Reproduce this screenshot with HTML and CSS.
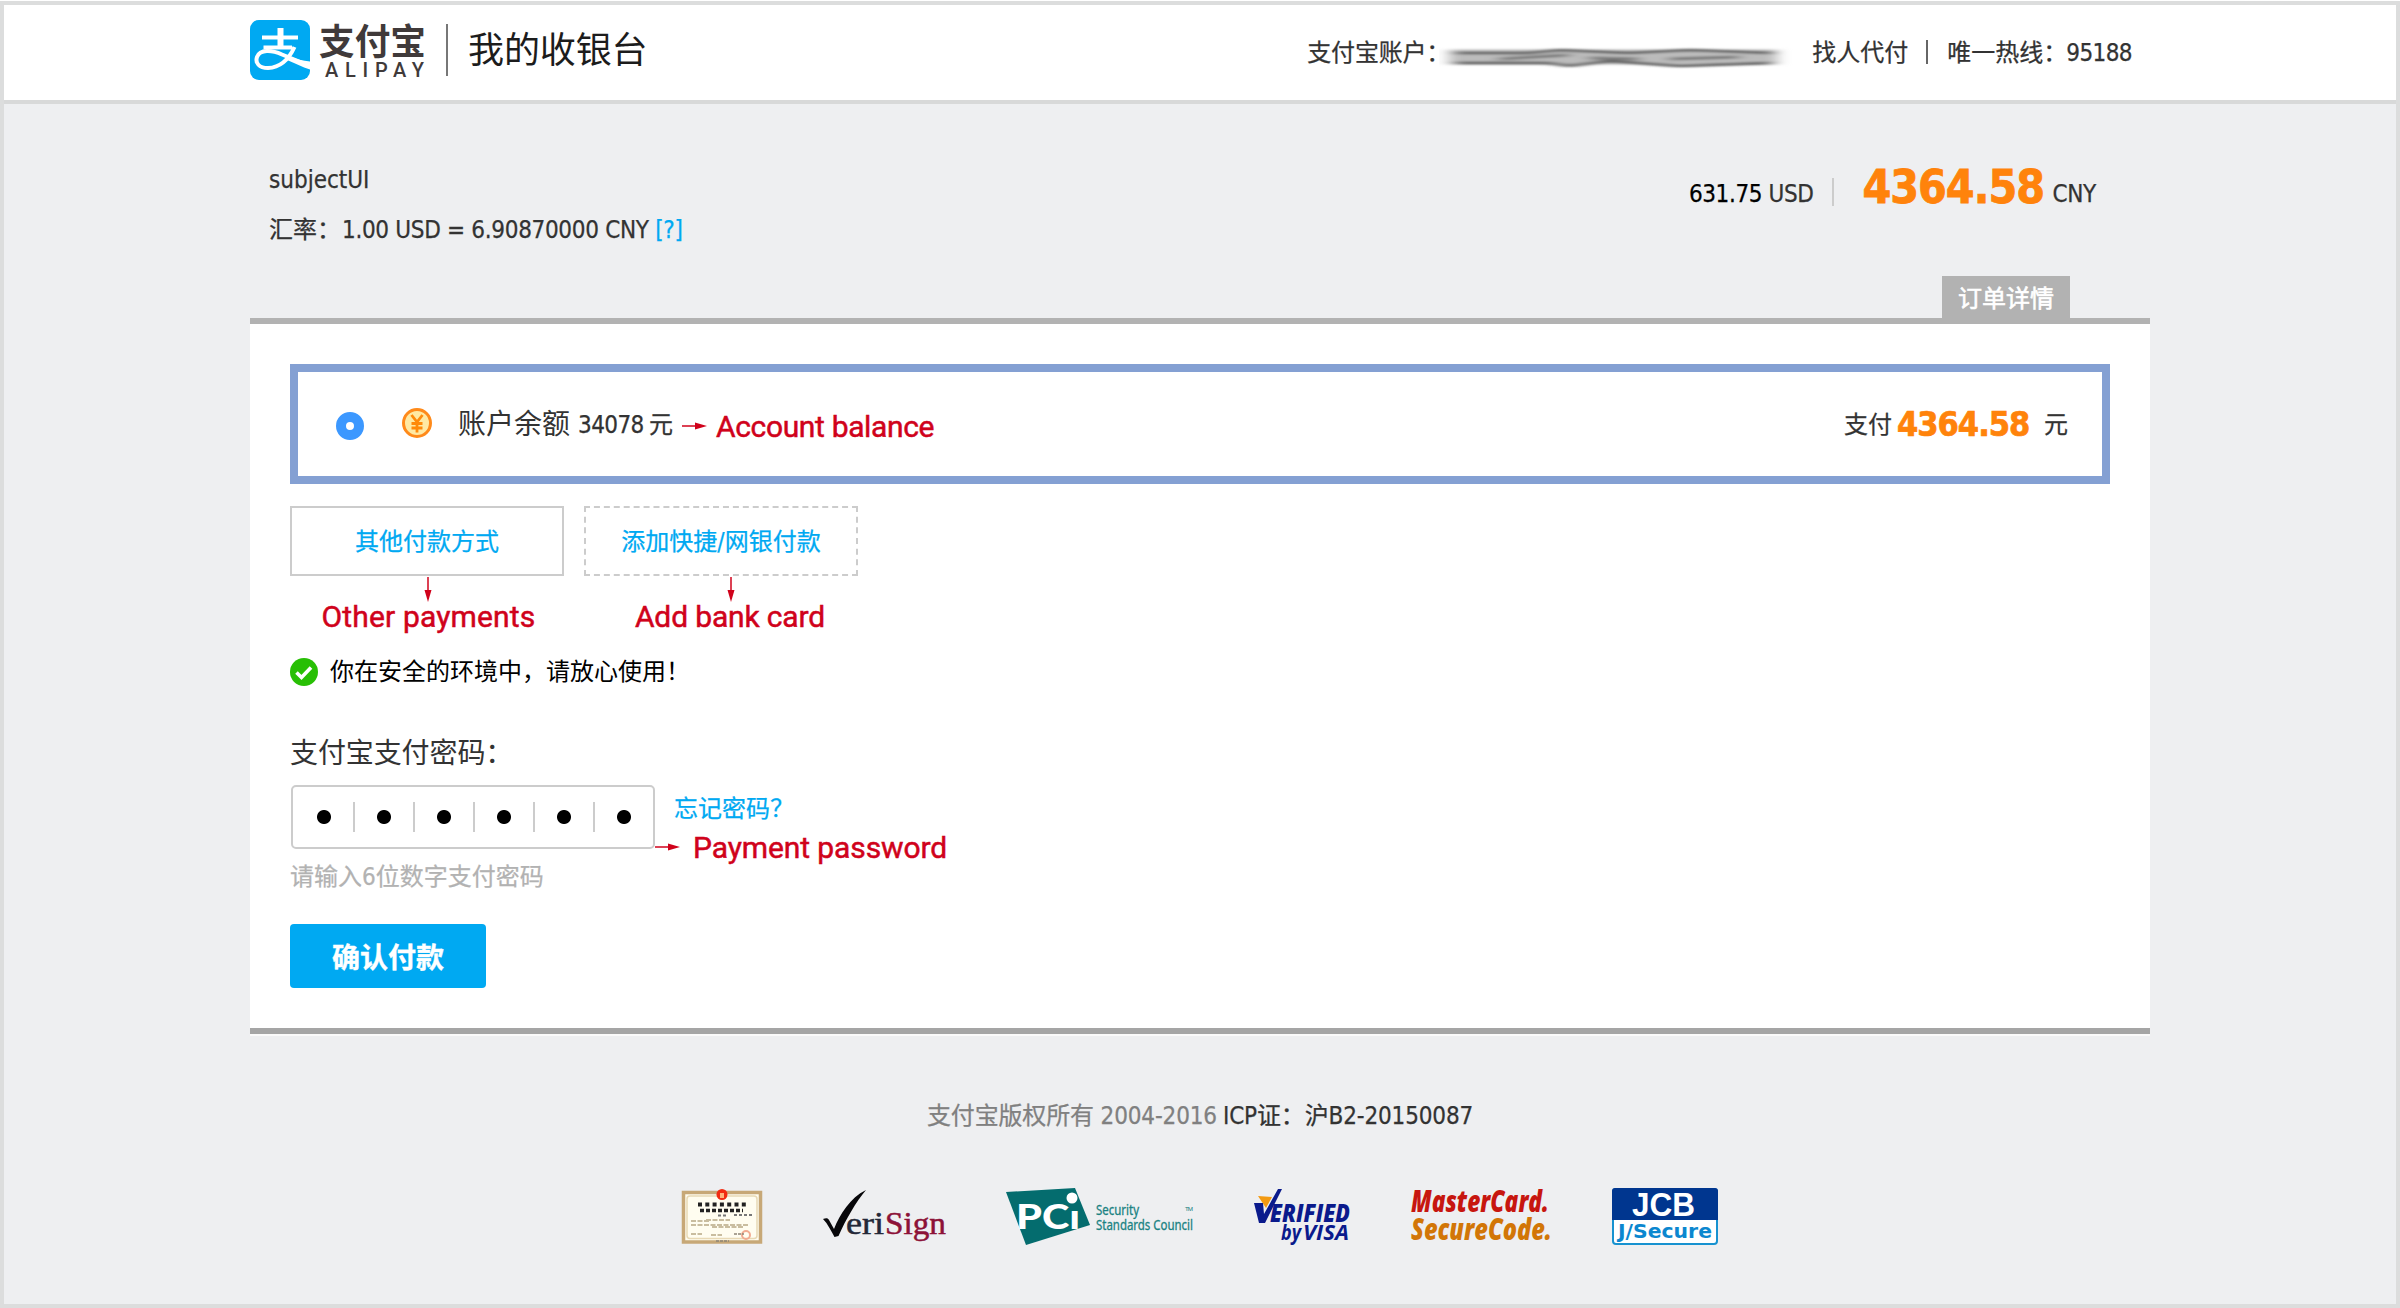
FILE: index.html
```html
<!DOCTYPE html>
<html lang="zh-CN">
<head>
<meta charset="utf-8">
<title>我的收银台</title>
<link rel="stylesheet" href="styles.css">
</head>
<body>
<div class="page">
  <header class="header">
    <div class="header-inner">
      <svg class="brand" width="198" height="60" viewBox="0 0 198 60">
        <rect width="60" height="60" rx="9" fill="#00a9f2"/>
        <g fill="none" stroke="#fff" stroke-width="4">
          <path d="M12 17.5H48M13.500 27.500H42" />
          <path d="M30.500 8V27" stroke-width="6"/>
          <path d="M44.500 27C39 39 31 47.500 18 48C9 48 5 43 7 37C10 29 22 30 32 34.500L60 46" stroke-width="4"/>
        </g>
        <path d="M38 36C46 39 53 41 60 41.500V49.500C52 47 45 43 37 40Z" fill="#fff"/>
        <text class="wordmark" x="69" y="35" textLength="107" lengthAdjust="spacingAndGlyphs">支付宝</text>
        <text class="latinmark" x="75" y="57" textLength="99">ALIPAY</text>
        <rect x="196" y="4" width="2" height="52" fill="#777"/>
      </svg>
      <h1 class="title">我的收银台</h1>
      <div class="account">
        <span class="account-label">支付宝账户：</span>
        <svg class="smudge" width="360" height="40" viewBox="0 0 360 40">
          <defs><filter id="soft" x="-5%" y="-50%" width="110%" height="200%"><feGaussianBlur stdDeviation="7 1.2"/></filter></defs>
          <g filter="url(#soft)" fill="none">
            <path d="M10 22H338" stroke="#bcbcbc" stroke-width="15"/>
            <path d="M16 18H90L120 15L190 18L250 15L334 18" stroke="#555" stroke-width="2.500"/>
            <path d="M16 28H110L130 31L170 26L240 31L332 28" stroke="#505050" stroke-width="2.500"/>
            <path d="M60 24L130 20M150 23L200 24M230 24L300 22" stroke="#777" stroke-width="3"/>
          </g>
        </svg>
        <span class="agent">找人代付</span>
        <span class="account-line"></span>
        <span class="hotline">唯一热线：</span><span class="hotline-number">95188</span>
      </div>
    </div>
  </header>

  <main class="main">
    <section class="order">
      <div class="order-info">
        <p class="subject">subjectUI</p>
        <p class="rate"><span class="rate-label">汇率：</span><span>1.00 USD = 6.90870000 CNY</span> <a class="help">[?]</a></p>
      </div>
      <div class="order-price">
        <span class="usd"><b>631.75</b> USD</span>
        <span class="price-line"></span>
        <span class="cny">4364.58</span>
        <span class="cny-unit">CNY</span>
      </div>
    </section>
    <div class="tab-row"><span class="tab">订单详情</span></div>

    <section class="panel">
      <div class="method">
        <span class="radio"></span>
        <svg class="coin" width="30" height="30" viewBox="0 0 30 30">
          <circle cx="15" cy="15" r="13.500" fill="#ffe9a3" stroke="#ff8a1a" stroke-width="3"/>
          <path d="M9.500 7L15 14L20.500 7M15 14V24.500M9.500 15.500H20.500M9.500 20H20.500" fill="none" stroke="#ff8a0a" stroke-width="2.800"/>
        </svg>
        <span class="method-name">账户余额</span>
        <span class="method-balance">34078</span>
        <span class="yuan">元</span>
        <svg class="arrow-balance" width="25" height="8" viewBox="0 0 25 8"><path d="M0 4H15" stroke="#d0021b" stroke-width="1.500"/><path d="M13 .5L25 4L13 7.500Z" fill="#d0021b"/></svg>
        <span class="note note-balance">Account balance</span>
        <span class="pay">支付</span>
        <span class="pay-amount">4364.58</span>
        <span class="yuan">元</span>
      </div>

      <div class="choices">
        <div class="choice">
          <a class="choice-box">其他付款方式</a>
          <svg class="arrow-down" width="8" height="25" viewBox="0 0 8 25"><path d="M4 0V15" stroke="#d0021b" stroke-width="1.500"/><path d="M.5 13L4 25L7.500 13Z" fill="#d0021b"/></svg>
          <span class="note note-other">Other payments</span>
        </div>
        <div class="choice">
          <a class="choice-box choice-add">添加快捷/网银付款</a>
          <svg class="arrow-down arrow-add" width="8" height="25" viewBox="0 0 8 25"><path d="M4 0V15" stroke="#d0021b" stroke-width="1.500"/><path d="M.5 13L4 25L7.500 13Z" fill="#d0021b"/></svg>
          <span class="note note-card">Add bank card</span>
        </div>
      </div>

      <p class="safe">
        <svg width="28" height="28" viewBox="0 0 28 28"><circle cx="14" cy="14" r="14" fill="#28bf05"/><path d="M6.500 14.500L11.500 19.500L21 9.500" fill="none" stroke="#fff" stroke-width="3.600"/></svg>
        <span>你在安全的环境中，请放心使用！</span>
      </p>

      <p class="password-label">支付宝支付密码：</p>
      <div class="password-row">
        <div class="password"><i></i><i></i><i></i><i></i><i></i><i></i></div>
        <div class="password-side">
          <a class="forgot">忘记密码？</a>
          <div class="note-row">
            <svg width="25" height="8" viewBox="0 0 25 8"><path d="M0 4H15" stroke="#d0021b" stroke-width="1.500"/><path d="M13 .5L25 4L13 7.500Z" fill="#d0021b"/></svg>
            <span class="note note-password">Payment password</span>
          </div>
        </div>
      </div>
      <p class="hint">请输入6位数字支付密码</p>
      <button class="confirm">确认付款</button>
    </section>
  </main>

  <footer class="footer">
    <p class="copyright"><span class="owner">支付宝版权所有 2004-2016</span><span class="icp">ICP证：沪B2-20150087</span></p>
    <div class="seals">
      <svg class="seal-cert" width="80" height="56" viewBox="0 0 80 56">
        <rect x="1.500" y="4.500" width="77" height="49.500" fill="#fffdf0" stroke="#c7a877" stroke-width="3.500"/>
        <rect x="5" y="8" width="70" height="42.500" rx="3" fill="none" stroke="#e8d9b5" stroke-width="1.500"/>
        <circle cx="40" cy="6.500" r="5.500" fill="#f22b10"/><path d="M38 5H42V10H38Z" fill="#ffb27a"/>
        <path d="M16 16.500H64" stroke="#222" stroke-width="4" stroke-dasharray="4 3.300"/>
        <path d="M18 22.500H61" stroke="#222" stroke-width="3.500" stroke-dasharray="4 2"/>
        <path d="M36 27.500H45M52 27H72" stroke="#777" stroke-width="2" stroke-dasharray="3 2"/>
        <path d="M9 33H28M24 32H48M9 37H66M30 39H62M9 46H20M29 47H40" stroke="#c9bd9f" stroke-width="2" stroke-dasharray="5 1.500"/>
        <circle cx="64" cy="47" r="4" fill="none" stroke="#f2ab91" stroke-width="2"/>
        <path d="M52 46H62M34 53H47" stroke="#8f8575" stroke-width="1.500" stroke-dasharray="3 1"/>
      </svg>
      <svg class="seal-verisign" width="124" height="56" viewBox="0 0 124 56">
        <path d="M0 31C3 30 5 30 6 32L11 41C17 26 27 10 43 2C33 14 23 31 15.500 48L11.500 49C8 43 5 36 0 31Z" fill="#07070a"/>
        <text class="veri" x="23" y="46" textLength="38" lengthAdjust="spacingAndGlyphs">eri</text>
        <text class="sign" x="62" y="46" textLength="61" lengthAdjust="spacingAndGlyphs">Sign</text>
      </svg>
      <svg class="seal-pci" width="188" height="57" viewBox="0 0 188 57">
        <path d="M0 4L69 0L84 37L20 57Z" fill="#046c6e"/>
        <text class="pci" x="10" y="41" textLength="64" lengthAdjust="spacingAndGlyphs">PCı</text>
        <circle cx="66" cy="10" r="5.500" fill="#fff"/>
        <g class="council"><text x="90" y="27" textLength="43" lengthAdjust="spacingAndGlyphs">Security</text><text x="90" y="42" textLength="97" lengthAdjust="spacingAndGlyphs">Standards Council</text></g>
        <text class="tm" x="179" y="23" textLength="8">TM</text>
      </svg>
      <svg class="seal-visa" width="98" height="57" viewBox="0 0 98 57">
        <path d="M4 8L18 9L12 20Z" fill="#f39a12"/>
        <path d="M0 15H9L10 26L24 1H28L11 35H5Z" fill="#0a1a8c"/>
        <text class="verified" x="16" y="34" textLength="80" lengthAdjust="spacingAndGlyphs">ERIFIED</text>
        <text class="by" x="27" y="52" textLength="20" lengthAdjust="spacingAndGlyphs">by</text>
        <text class="visa" x="49" y="52" textLength="46" lengthAdjust="spacingAndGlyphs">VISA</text>
      </svg>
      <svg class="seal-mc" width="142" height="57" viewBox="0 0 142 57">
        <text class="mc" x="0" y="24" textLength="138" lengthAdjust="spacingAndGlyphs">MasterCard.</text>
        <text class="sc" x="0" y="52" textLength="141" lengthAdjust="spacingAndGlyphs">SecureCode.</text>
      </svg>
      <svg class="seal-jcb" width="106" height="57" viewBox="0 0 106 57">
        <rect x="1" y="1" width="104" height="55" rx="3" fill="#fff" stroke="#1792d0" stroke-width="2"/>
        <path d="M0 32V3Q0 0 3 0H103Q106 0 106 3V32Z" fill="#00368f"/>
        <text class="jcb" x="20" y="28" textLength="63" lengthAdjust="spacingAndGlyphs">JCB</text>
        <text class="jsecure" x="6" y="50" textLength="94" lengthAdjust="spacingAndGlyphs">J/Secure</text>
      </svg>
    </div>
  </footer>
</div>
</body>
</html>
```

FILE: styles.css
```css
* { box-sizing: border-box; }
body { margin: 0; padding-top: 1px; background: #fff; }
p, h1 { margin: 0; font-weight: 400; }
.page {
  height: 1307px;
  border: 4px solid #dcdddd;
  background: #eeeff1;
  font: 24px/36px "DejaVu Sans Condensed", "Noto Sans CJK SC", sans-serif;
  color: #333;
  overflow: hidden;
  white-space: nowrap;
  -webkit-text-stroke-width: 0.25px;
}
.header { height: 99px; background: #fff; border-bottom: 4px solid #d8d9d9; }
.header-inner { width: 1900px; height: 95px; margin: 0 auto; display: flex; align-items: flex-start; }
.brand { margin-top: 15px; overflow: visible; -webkit-text-stroke-width: 0; }
.wordmark { font: 700 36px "Noto Sans CJK SC", sans-serif; fill: #403a3a; }
.latinmark { font: 500 20px Roboto, sans-serif; fill: #403a3a; }
.title { margin: 0 0 0 20px; padding-top: 20px; font-size: 36px; line-height: 52px; letter-spacing: -0.1px; color: #1c1c1c; -webkit-text-stroke-width: 0; }
.account { margin-left: auto; margin-right: 18px; padding-top: 30px; display: flex; align-items: flex-start; }
.account-label { width: 132px; letter-spacing: -0.2px; }
.smudge { width: 360px; margin: 0 13px 0 0; }
.agent { width: 98px; }
.account-line { width: 2px; height: 24px; margin: 5px 19px 0 16px; background: #666; }
.hotline { width: 119px; }
.hotline-number { letter-spacing: -0.6px; }

.main { width: 1900px; margin: 0 auto; }
.order { height: 172px; padding: 58px 54px 0 19px; display: flex; justify-content: space-between; }
.subject { letter-spacing: 0; }
.rate { margin-top: 14px; letter-spacing: -0.32px; }
.rate-label { display: inline-block; width: 73px; letter-spacing: 0; }
.help { color: #00a9f2; }
.order-price { display: flex; align-items: flex-start; }
.usd { padding-top: 14px; letter-spacing: -0.4px; }
.usd b { font-weight: 400; color: #000; }
.price-line { width: 2px; height: 28px; margin: 16px 28px 0 19px; background: #ccc; }
.cny { width: 183px; margin-top: -1px; font-size: 46px; line-height: 52px; font-weight: 700; color: #ff830b; letter-spacing: -1px; -webkit-text-stroke-width: 0.8px; }
.cny-unit { margin-left: 7px; padding-top: 14px; letter-spacing: -0.3px; }
.tab-row { height: 42px; display: flex; justify-content: flex-end; padding-right: 80px; }
.tab { width: 128px; background: #b2b2b2; color: #fff; line-height: 46px; text-align: center; -webkit-text-stroke-width: 0.6px; }

.panel { height: 716px; padding: 40px; background: #fff; border-top: 6px solid #b2b2b2; border-bottom: 6px solid #a5a5a5; }
.method { height: 120px; padding: 0 34px 0 38px; border: 8px solid #84a0d3; display: flex; align-items: center; }
.radio { width: 28px; height: 28px; margin-top: 3px; border: 10px solid #3c98ff; border-radius: 50%; background: #fff; }
.coin { margin: 0 26px 2px 38px; }
.method-name { width: 120px; padding-top: 2px; font-size: 28px; -webkit-text-stroke-width: 0; }
.method-balance { width: 71px; padding-top: 1px; letter-spacing: -0.6px; }
.yuan, .pay { padding-top: 1px; }
.arrow-balance { margin: 3px 9px 0; }
.note { font: 400 30px/36px Roboto, sans-serif; color: #d0021b; -webkit-text-stroke: 0.5px #d0021b; }
.note-balance { letter-spacing: -0.35px; padding-top: 5px; }
.pay { margin-left: auto; width: 53px; }
.pay-amount { width: 147px; font-size: 34px; font-weight: 700; color: #ff830b; letter-spacing: -1px; -webkit-text-stroke-width: 0.7px; }
.choices { display: flex; gap: 20px; margin-top: 22px; height: 142px; }
.choice { width: 274px; display: flex; flex-direction: column; align-items: center; }
.choice-box { width: 274px; height: 70px; flex: none; border: 2px solid #ccc; line-height: 68px; text-align: center; color: #00a9f2; }
.choice-add { border-style: dashed; }
.arrow-down { margin: 1px 0 0 1px; }
.arrow-add { margin-left: 19px; }
.note-other, .note-card { margin-top: -3px; }
.note-other { margin-left: 3px; letter-spacing: 0.15px; }
.note-card { margin-left: 18px; letter-spacing: -0.15px; }
.safe { margin-top: 6px; display: flex; align-items: center; gap: 12px; color: #000; -webkit-text-stroke-width: 0; }
.password-label { margin-top: 44px; font-size: 28px; line-height: 40px; letter-spacing: -0.1px; -webkit-text-stroke-width: 0; }
.password-row { display: flex; margin: 11px 0 0 1px; height: 64px; }
.password { width: 364px; height: 64px; padding-left: 2px; border: 2px solid #ccc; border-radius: 5px; display: flex; align-items: center; }
.password i { width: 60px; height: 30px; flex: none; border-right: 2px solid #ccc; background: radial-gradient(circle 10px at 29px 15px, #000 6.500px, transparent 7.500px); }
.password i:last-child { border: 0; }
.forgot { display: block; margin: 6px 0 0 19px; color: #00a9f2; }
.note-row { display: flex; align-items: center; gap: 13px; height: 36px; margin-top: 2px; }
.note-password { letter-spacing: -0.1px; padding-top: 1px; }
.hint { margin: 10px 0 0; color: #b2b2b2; }
.confirm { display: block; width: 196px; height: 64px; margin-top: 29px; border: 0; border-radius: 4px; background: #00a9f2; color: #fff; font: 700 28px/64px "Noto Sans CJK SC", sans-serif; padding: 0; -webkit-text-stroke: 0.4px #fff; }

.footer { display: flex; flex-direction: column; align-items: center; border-top: 2px solid #fafafa; width: 1900px; margin: 0 auto; }
.copyright { margin-top: 62px; display: flex; gap: 6px; letter-spacing: -0.15px; }
.owner { color: #808080; }
.seals { width: 1036px; height: 57px; margin-top: 54px; display: flex; -webkit-text-stroke-width: 0; }
.seals svg { flex: none; overflow: visible; }
.seal-verisign { margin-left: 61px; }
.seal-pci { margin-left: 59px; }
.seal-visa { margin-left: 60px; }
.seal-mc { margin-left: 59px; }
.seal-jcb { margin-left: 59px; }
.veri { font: 31px "Liberation Serif", serif; fill: #232838; stroke: #232838; stroke-width: 0.5px; }
.sign { font: 31px "Liberation Serif", serif; fill: #8c1238; stroke: #8c1238; stroke-width: 0.5px; }
.pci { font: 900 34px Lato, sans-serif; fill: #fff; }
.council { font: 14px "Noto Sans", sans-serif; fill: #198282; stroke: #198282; stroke-width: 0.3px; }
.tm { font: 6px Roboto, sans-serif; fill: #198282; }
.verified { font: italic 800 24px "Open Sans", sans-serif; fill: #0a1a8c; }
.by, .visa { font: italic 700 21px "Open Sans", sans-serif; fill: #0a1a8c; }
.mc { font: italic 800 30px "Open Sans", sans-serif; fill: #c7160f; }
.sc { font: italic 800 30px "Open Sans", sans-serif; fill: #d27607; }
.jcb { font: 700 34px "Liberation Sans", sans-serif; fill: #fff; }
.jsecure { font: 700 20px "DejaVu Sans", sans-serif; fill: #0b87cf; }
```
